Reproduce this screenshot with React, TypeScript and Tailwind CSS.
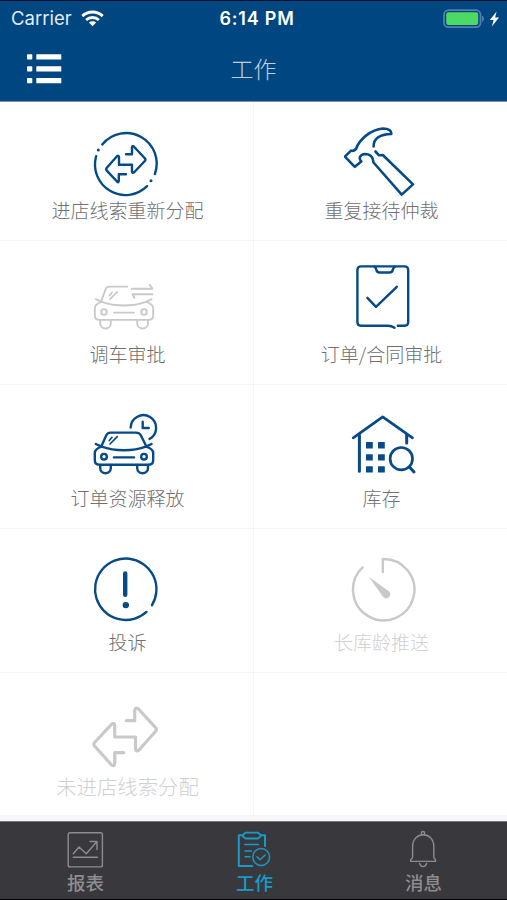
import React from 'react';
import clsx from 'clsx';

type IconProps = { className?: string; children?: React.ReactNode };

// Shared canvas for the menu icons
function MenuIcon({ className, children }: IconProps) {
  return (
    <svg
      width="73"
      height="80"
      viewBox="0 0 73 80"
      fill="none"
      stroke="currentColor"
      strokeWidth="2.4"
      strokeLinecap="round"
      strokeLinejoin="round"
      className={clsx('shrink-0', className)}
    >
      {children}
    </svg>
  );
}

function TabIcon({ children }: IconProps) {
  return (
    <svg
      width="41"
      height="41"
      viewBox="0 0 41 41"
      fill="none"
      stroke="currentColor"
      strokeWidth="1.4"
      strokeLinecap="round"
      strokeLinejoin="round"
    >
      {children}
    </svg>
  );
}

function Reassign() {
  return (
    <MenuIcon>
      <path d="M12.3 26.4 A30.6 30.6 0 0 1 64.9 56" />
      <path d="M57.1 68.2 A30.6 30.6 0 0 1 6.1 38.2" />
      <circle cx="8.3" cy="32" r="1.5" fill="currentColor" stroke="none" />
      <circle cx="61" cy="62.7" r="1.5" fill="currentColor" stroke="none" />
      <path d="M36 36.3 H42 V29.5 Q42.3 27.3 44 28.7 L54.8 40.3 Q56 41.7 54.8 43 L44.2 54.3 Q42.3 55.6 42 53.5 V46.7 H29 V39 Q28.7 37 27 38.3 L16.8 49.8 Q15.6 51.3 16.8 52.6 L27.2 63.8 Q28.6 65 28.8 63 V56.3 H36" />
    </MenuIcon>
  );
}

function Hammer() {
  return (
    <MenuIcon>
      <path
        d="M29.6 28.5 C29.5 22 34 16.5 47.3 16 C47.5 13 45 10.5 39 10.5 C27 11.5 15.5 21 12 31 Q9.5 33.5 7 32.6 L0.9 38.6 L10.8 48.8 L17.3 43.5 C14.5 40.5 15.5 37 20.5 36 C26.5 36 28.5 39 29 42 L29.5 44.5 L57.7 76.6 L69 66.4 L38.8 37 L35 37.3 L31.5 33.5"
        strokeWidth="2.6"
      />
    </MenuIcon>
  );
}

function CarBody() {
  return (
    <>
      <path d="M5.8 38 L11.6 40.7 C25 45.5 43 45.5 56 40.7 L61.6 38" />
      <path d="M11.6 40.7 Q4.8 43 4.8 47 V54 Q4.8 58.7 9.4 58.7 H58.6 Q63.2 58.7 63.2 54 V47 Q63.2 43 56 40.7" />
      <circle cx="14" cy="50.7" r="2.8" />
      <circle cx="54" cy="50.7" r="2.8" />
      <path d="M24 51.4 H44" />
      <path d="M10.2 59 V62 C10.2 69 20.8 69 20.8 62 V59" />
      <path d="M47.2 59 V62 C47.2 69 58 69 58 62 V59" />
      <path d="M19.3 34.5 L22 31.3 M20 38 L27.3 30.6" strokeWidth="1.7" />
    </>
  );
}

function CarTransfer() {
  return (
    <MenuIcon>
      <g strokeWidth="1.9">
        <g transform="translate(0 -0.8)">
          <CarBody />
        </g>
        <path d="M11.5 38.3 L15.5 27.5 Q16.7 24.6 19.5 24.6 H37.3" />
        <path d="M41.7 26.7 H62.5 L59.8 22.9" />
        <path d="M62.5 32.3 H42.5 L44.3 35.8" />
      </g>
    </MenuIcon>
  );
}

function Clipboard() {
  return (
    <MenuIcon>
      <path d="M50.5 65.8 Q47.5 63.7 44 63.7 H17 Q13.4 63.7 13.4 60 V8 Q13.4 4.4 17 4.4 H60.5 Q64.2 4.4 64.2 8 V60 Q64.2 63.7 60.5 63.7 H53.8" />
      <path d="M30.5 4.8 Q32 5.5 32.3 7.5 Q32.7 10.5 35.5 10.5 H45.5 Q48.5 10.5 48.9 7.5 Q49.2 5.5 50.8 4.8" />
      <path d="M23.4 35.8 L32 44.8 L52.8 24.8" />
    </MenuIcon>
  );
}

function CarClock() {
  return (
    <MenuIcon>
      <CarBody />
      <path d="M11.6 39.8 L16.3 29.3 Q17.6 26.6 20.5 26.6 H46 Q49.4 26.6 50.8 29.3 L56 39.8" />
      <path d="M40.7 21.5 A12.7 12.7 0 1 1 59.5 33" />
      <path d="M52.7 15.7 V22 H58.8" />
    </MenuIcon>
  );
}

function House() {
  return (
    <MenuIcon>
      <path d="M9.2 31.8 L38.7 10.9 L68.5 31.8" strokeWidth="2.7" />
      <path d="M15.4 29 V65.3 M62.7 29 V37" strokeWidth="3" />
      <g fill="currentColor" stroke="none">
        {[36, 48.2, 60.2].map((y) => (
          <React.Fragment key={y}>
            <rect x="22" y={y} width="6.8" height="6.4" rx="0.5" />
            <rect x="34" y={y} width="6.8" height="6.4" rx="0.5" />
          </React.Fragment>
        ))}
      </g>
      <circle cx="57.3" cy="52.7" r="11.2" strokeWidth="2.7" />
      <path d="M65.4 61 L70 66" strokeWidth="3" />
    </MenuIcon>
  );
}

function Complaint() {
  return (
    <MenuIcon>
      <path d="M56.5 61.9 A30.7 30.7 0 1 1 62 55.2" />
      <path d="M35.2 23.5 V44.8" strokeWidth="4.4" />
      <circle cx="35.8" cy="55.1" r="3.2" fill="currentColor" stroke="none" />
    </MenuIcon>
  );
}

function Timer() {
  return (
    <MenuIcon>
      <path d="M38.8 22 V9 A30.7 30.7 0 1 1 18.6 17.4" />
      <path d="M24.7 26.7 L45.2 41.5 A4 4 0 1 1 39 46.8 Z" fill="currentColor" stroke="none" />
    </MenuIcon>
  );
}

function Arrows() {
  return (
    <MenuIcon>
      <path
        d="M36.3 26.7 H44.7 V17 Q45 13 48 14.5 L65.6 33.7 Q67.2 35.5 65.6 37.3 L49.3 55.8 Q46 58.5 45.5 55 V43 H24.7 V31.5 Q24.3 28.3 21.5 30.3 L4.6 48.5 Q3.2 50.3 4.6 52 L21.5 71 Q24.3 73 24.8 69.5 V58.7 H33.8"
        strokeWidth="3.2"
      />
    </MenuIcon>
  );
}

const menu = [
  { label: '进店线索重新分配', icon: Reassign },
  { label: '重复接待仲裁', icon: Hammer },
  { label: '调车审批', icon: CarTransfer, mutedIcon: true },
  { label: '订单/合同审批', icon: Clipboard },
  { label: '订单资源释放', icon: CarClock },
  { label: '库存', icon: House },
  { label: '投诉', icon: Complaint },
  { label: '长库龄推送', icon: Timer, mutedIcon: true, muted: true },
  { label: '未进店线索分配', icon: Arrows, mutedIcon: true, muted: true, wide: true },
];

function StatusBar() {
  return (
    <div className="flex h-[35px] items-center pl-[11px] pr-[7px] font-['Inter',sans-serif] text-[18px] text-white">
      <div className="flex flex-1 items-center gap-[9px]">
        <span className="text-[18.5px] leading-none text-[#e3edf7]">Carrier</span>
        <svg width="23" height="17" viewBox="0 0 23 17" fill="none" stroke="currentColor" strokeWidth="2.9">
          <path d="M1.3 6.1 C7 0.6 16 0.6 21.7 6.1" />
          <path d="M5.1 10 C8.7 6.6 14.3 6.6 17.9 10" />
          <path d="M11.5 16.3 L7.9 12.6 C9.9 10.8 13.1 10.8 15.1 12.6 Z" fill="currentColor" stroke="none" />
        </svg>
      </div>
      <span className="ml-[3px] text-[18px] font-semibold leading-none tracking-[0.8px]">6:14 PM</span>
      <div className="flex flex-1 items-center justify-end gap-[4px]">
        <svg width="42" height="20" viewBox="0 0 42 20" fill="none">
          <rect x="1" y="1.2" width="36.5" height="17" rx="4.5" stroke="#557fab" strokeWidth="1.8" />
          <rect x="3.2" y="3.3" width="32" height="12.7" rx="2.2" fill="#4cd964" />
          <path d="M39.5 7 Q41.5 9.7 39.5 12.4 Z" fill="#557fab" stroke="#557fab" />
        </svg>
        <svg width="11" height="16" viewBox="0 0 11 16" fill="currentColor">
          <path d="M7.6 0.5 L0.8 9 H4.6 L2.9 15.5 L10 6.6 H6.1 Z" />
        </svg>
      </div>
    </div>
  );
}

function Header() {
  return (
    <header className="h-[102px] shrink-0 border-b border-t border-b-[#7894b1] border-t-[#020f2c] bg-[#004681]">
      <StatusBar />
      <div className="grid h-[65px] grid-cols-3 items-center">
        <button className="ml-[27px] w-[35px]">
          <svg width="35" height="30" viewBox="0 0 35 30" fill="white">
            {[0.3, 12.3, 24].map((y) => (
              <React.Fragment key={y}>
                <rect x="0" y={y} width="5.3" height="5.2" rx="0.8" />
                <rect x="9.3" y={y} width="25" height="5.2" rx="0.5" />
              </React.Fragment>
            ))}
          </svg>
        </button>
        <h1 className="text-center text-[23px] font-light leading-none text-[#bdd0e2]">工作</h1>
      </div>
    </header>
  );
}

export default function App() {
  return (
    <div className="flex h-[900px] w-[507px] flex-col overflow-hidden bg-white font-['Noto_Sans_CJK_SC',sans-serif]">
      <Header />

      <main className="grid flex-1 grid-cols-[254px_253px] grid-rows-[139px_144px_144px_144px_142px] bg-[#f6f6f8]">
        {[...menu, null].map((item, i) => {
          const Icon = item?.icon;
          return (
            <div
              key={i}
              className={clsx(
                'flex flex-col items-center bg-white',
                i < 2 ? 'pt-4' : 'pt-[21px]',
                i < 8 && 'border-b border-[#f5f5f6]',
                i % 2 === 0 && 'border-r border-r-[#f5f5f6]'
              )}
            >
              {item && Icon && (
                <>
                  <div className={item.mutedIcon ? 'text-[#c9c9c9]' : 'text-[#064a87]'}>
                    <Icon />
                  </div>
                  <span
                    className={clsx(
                      'whitespace-nowrap pl-[2px] font-light leading-[24px]',
                      item.wide ? 'text-[20.4px]' : 'text-[19px]',
                      item.muted ? 'text-[#d0d0d0]' : 'text-[#707070]'
                    )}
                  >
                    {item.label}
                  </span>
                </>
              )}
            </div>
          );
        })}
      </main>

      <nav className="grid h-[79px] shrink-0 grid-cols-3 border-b border-t border-b-black border-t-[#77777a] bg-[#39383d] text-[#8d8d90]">
        <button className="flex flex-col items-center pt-[7px]">
          <TabIcon>
            <rect x="4.2" y="3.7" width="34.2" height="34.2" rx="2" />
            <path d="M9.3 24.7 L15 18 L22.3 24.7 L32.7 12.7 M26 12.5 H33 V20.5" />
            <path d="M9.3 28.2 H33.5" />
          </TabIcon>
          <span className="pl-[2px] text-[18.5px] font-medium leading-[24px]">报表</span>
        </button>
        <button className="flex flex-col items-center pt-[7px] text-[#189bc9]">
          <TabIcon>
            <path d="M10 6.2 H5.8 V37 H19.2 M28 6.2 H32 V17" strokeWidth="2" />
            <path d="M12.5 3.7 H25 L27.5 6 V7.5 L25 9.5 H12.5 L10 7.5 V6 Z" strokeWidth="1.8" />
            <path d="M11.8 15.4 H25.4 M12 22 H18.5 M12 27.7 H17" strokeWidth="1.5" />
            <circle cx="28.2" cy="28" r="8.4" strokeWidth="1.5" />
            <path d="M24 27.8 L27 30.7 L32.2 26" strokeWidth="1.5" />
          </TabIcon>
          <span className="pl-[2px] text-[18.5px] font-medium leading-[24px]">工作</span>
        </button>
        <button className="flex flex-col items-center pt-[7px]">
          <TabIcon>
            <circle cx="21" cy="4.2" r="1.7" />
            <path d="M10.6 28 V17.5 C10.6 1.8 31.8 1.8 31.8 17.5 V28 Q31.9 30 33.5 30.4 V32.4 H8.7 V30.4 Q10.5 30 10.6 28 Z" />
            <path d="M17.6 34.5 Q18.7 37.6 21 37.6 Q23.5 37.6 24.6 34.5" />
          </TabIcon>
          <span className="pl-[2px] text-[18.5px] font-medium leading-[24px]">消息</span>
        </button>
      </nav>
    </div>
  );
}
